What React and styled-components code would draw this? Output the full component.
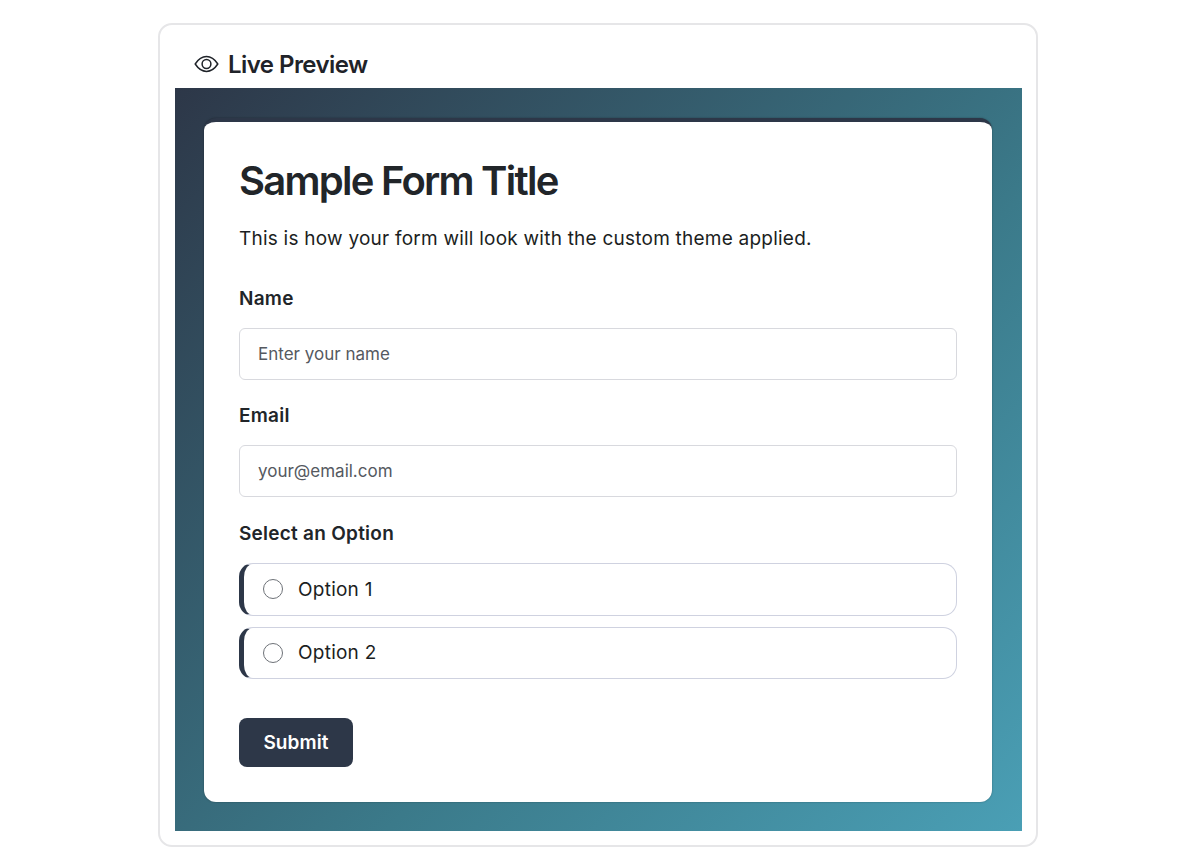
import React from 'react'
import styled, { createGlobalStyle } from 'styled-components'

const GlobalStyle = createGlobalStyle`
  * { box-sizing: border-box; }
  html, body { margin: 0; padding: 0; background: #fff; }
  body {
    font-family: Inter, "Liberation Sans", sans-serif;
    color: #212529;
  }
`

const Page = styled.div`
  width: 1200px;
  height: 861px;
  padding: 23px 162px 14px 158px;
`

const Panel = styled.section`
  height: 824px;
  border: 2px solid #e6e6e8;
  border-radius: 14px;
  padding: 23px 14px 15px 15px;
  background: #fff;
`

const PanelHeader = styled.header`
  display: flex;
  align-items: center;
  gap: 9px;
  height: 40px;
  padding: 0 0 8px 19px;
  font-size: 24px;
  font-weight: 600;
  letter-spacing: -0.55px;
  color: #1f2329;
`

const EyeIcon = styled.svg`
  flex: none;
  width: 25px;
  height: 18px;
`

const Canvas = styled.div`
  height: 743px;
  padding: 30px 30px 29px 29px;
  background: linear-gradient(135deg, #2d3748 0%, #3b7a8a 60%, #4a9fb5 100%);
`

const FormCard = styled.form`
  height: 684px;
  padding: 33px 35px 0 35px;
  background: #fff;
  border-top: 4px solid #2d3748;
  border-radius: 12px;
  box-shadow: 0 0 2px rgba(0, 0, 0, 0.35);
`

const Title = styled.h1`
  margin: 0;
  font-size: 40px;
  line-height: 52px;
  font-weight: 600;
  letter-spacing: -1.75px;
  color: #212529;
`

const Intro = styled.p`
  margin: 18px 0 0;
  font-size: 19px;
  line-height: 28px;
  letter-spacing: 0.23px;
  color: #1b1e22;
`

const Field = styled.div`
  margin-top: ${(p) => p.$top}px;
`

const Label = styled.label`
  display: block;
  font-size: 19px;
  line-height: 28px;
  font-weight: 600;
  letter-spacing: 0.25px;
  color: #212529;
`

const TextInput = styled.input`
  display: block;
  width: 100%;
  height: 52px;
  margin-top: 15px;
  padding: 0 18px;
  border: 1px solid #d8d9de;
  border-radius: 6px;
  background: #fff;
  font-family: inherit;
  font-size: 17px;
  color: #212529;
  &::placeholder {
    color: #55595f;
    opacity: 1;
  }
`

const OptionList = styled.div`
  display: flex;
  flex-direction: column;
  gap: 11px;
  margin-top: 15px;
`

const OptionRow = styled.label`
  display: flex;
  align-items: center;
  gap: 15px;
  height: 52.5px;
  padding-left: 19px;
  border: 1px solid #cfd2e0;
  border-left: 5px solid #2d3748;
  border-radius: 14px;
  font-size: 19px;
  letter-spacing: 0.25px;
  color: #1b1e22;
`

const Radio = styled.span`
  width: 20px;
  height: 20px;
  border: 1px solid #6e7278;
  border-radius: 50%;
  background: #fff;
`

const SubmitButton = styled.button`
  display: block;
  width: 114px;
  height: 49px;
  margin-top: 39px;
  border: 0;
  border-radius: 8px;
  background: #2d3748;
  color: #fff;
  font-family: inherit;
  font-size: 19px;
  font-weight: 600;
  letter-spacing: 0.1px;
`

export default function App() {
  return (
    <>
      <GlobalStyle />
      <Page>
        <Panel>
          <PanelHeader>
            <EyeIcon viewBox="0 0 25 18" fill="none" stroke="currentColor" strokeWidth="1.5" strokeLinejoin="round">
              <path d="M1.2 9 C4.5 4 8 1.6 12.5 1.6 C17 1.6 20.5 4 23.8 9 C20.5 14 17 16.4 12.5 16.4 C8 16.4 4.5 14 1.2 9 Z" />
              <circle cx="12.5" cy="9" r="4.4" />
            </EyeIcon>
            Live Preview
          </PanelHeader>
          <Canvas>
            <FormCard onSubmit={(e) => e.preventDefault()}>
              <Title>Sample Form Title</Title>
              <Intro>This is how your form will look with the custom theme applied.</Intro>
              <Field $top={32}>
                <Label>Name</Label>
                <TextInput placeholder="Enter your name" />
              </Field>
              <Field $top={22}>
                <Label>Email</Label>
                <TextInput placeholder="your@email.com" />
              </Field>
              <Field $top={23}>
                <Label>Select an Option</Label>
                <OptionList>
                  <OptionRow><Radio />Option 1</OptionRow>
                  <OptionRow><Radio />Option 2</OptionRow>
                </OptionList>
              </Field>
              <SubmitButton type="submit">Submit</SubmitButton>
            </FormCard>
          </Canvas>
        </Panel>
      </Page>
    </>
  )
}
